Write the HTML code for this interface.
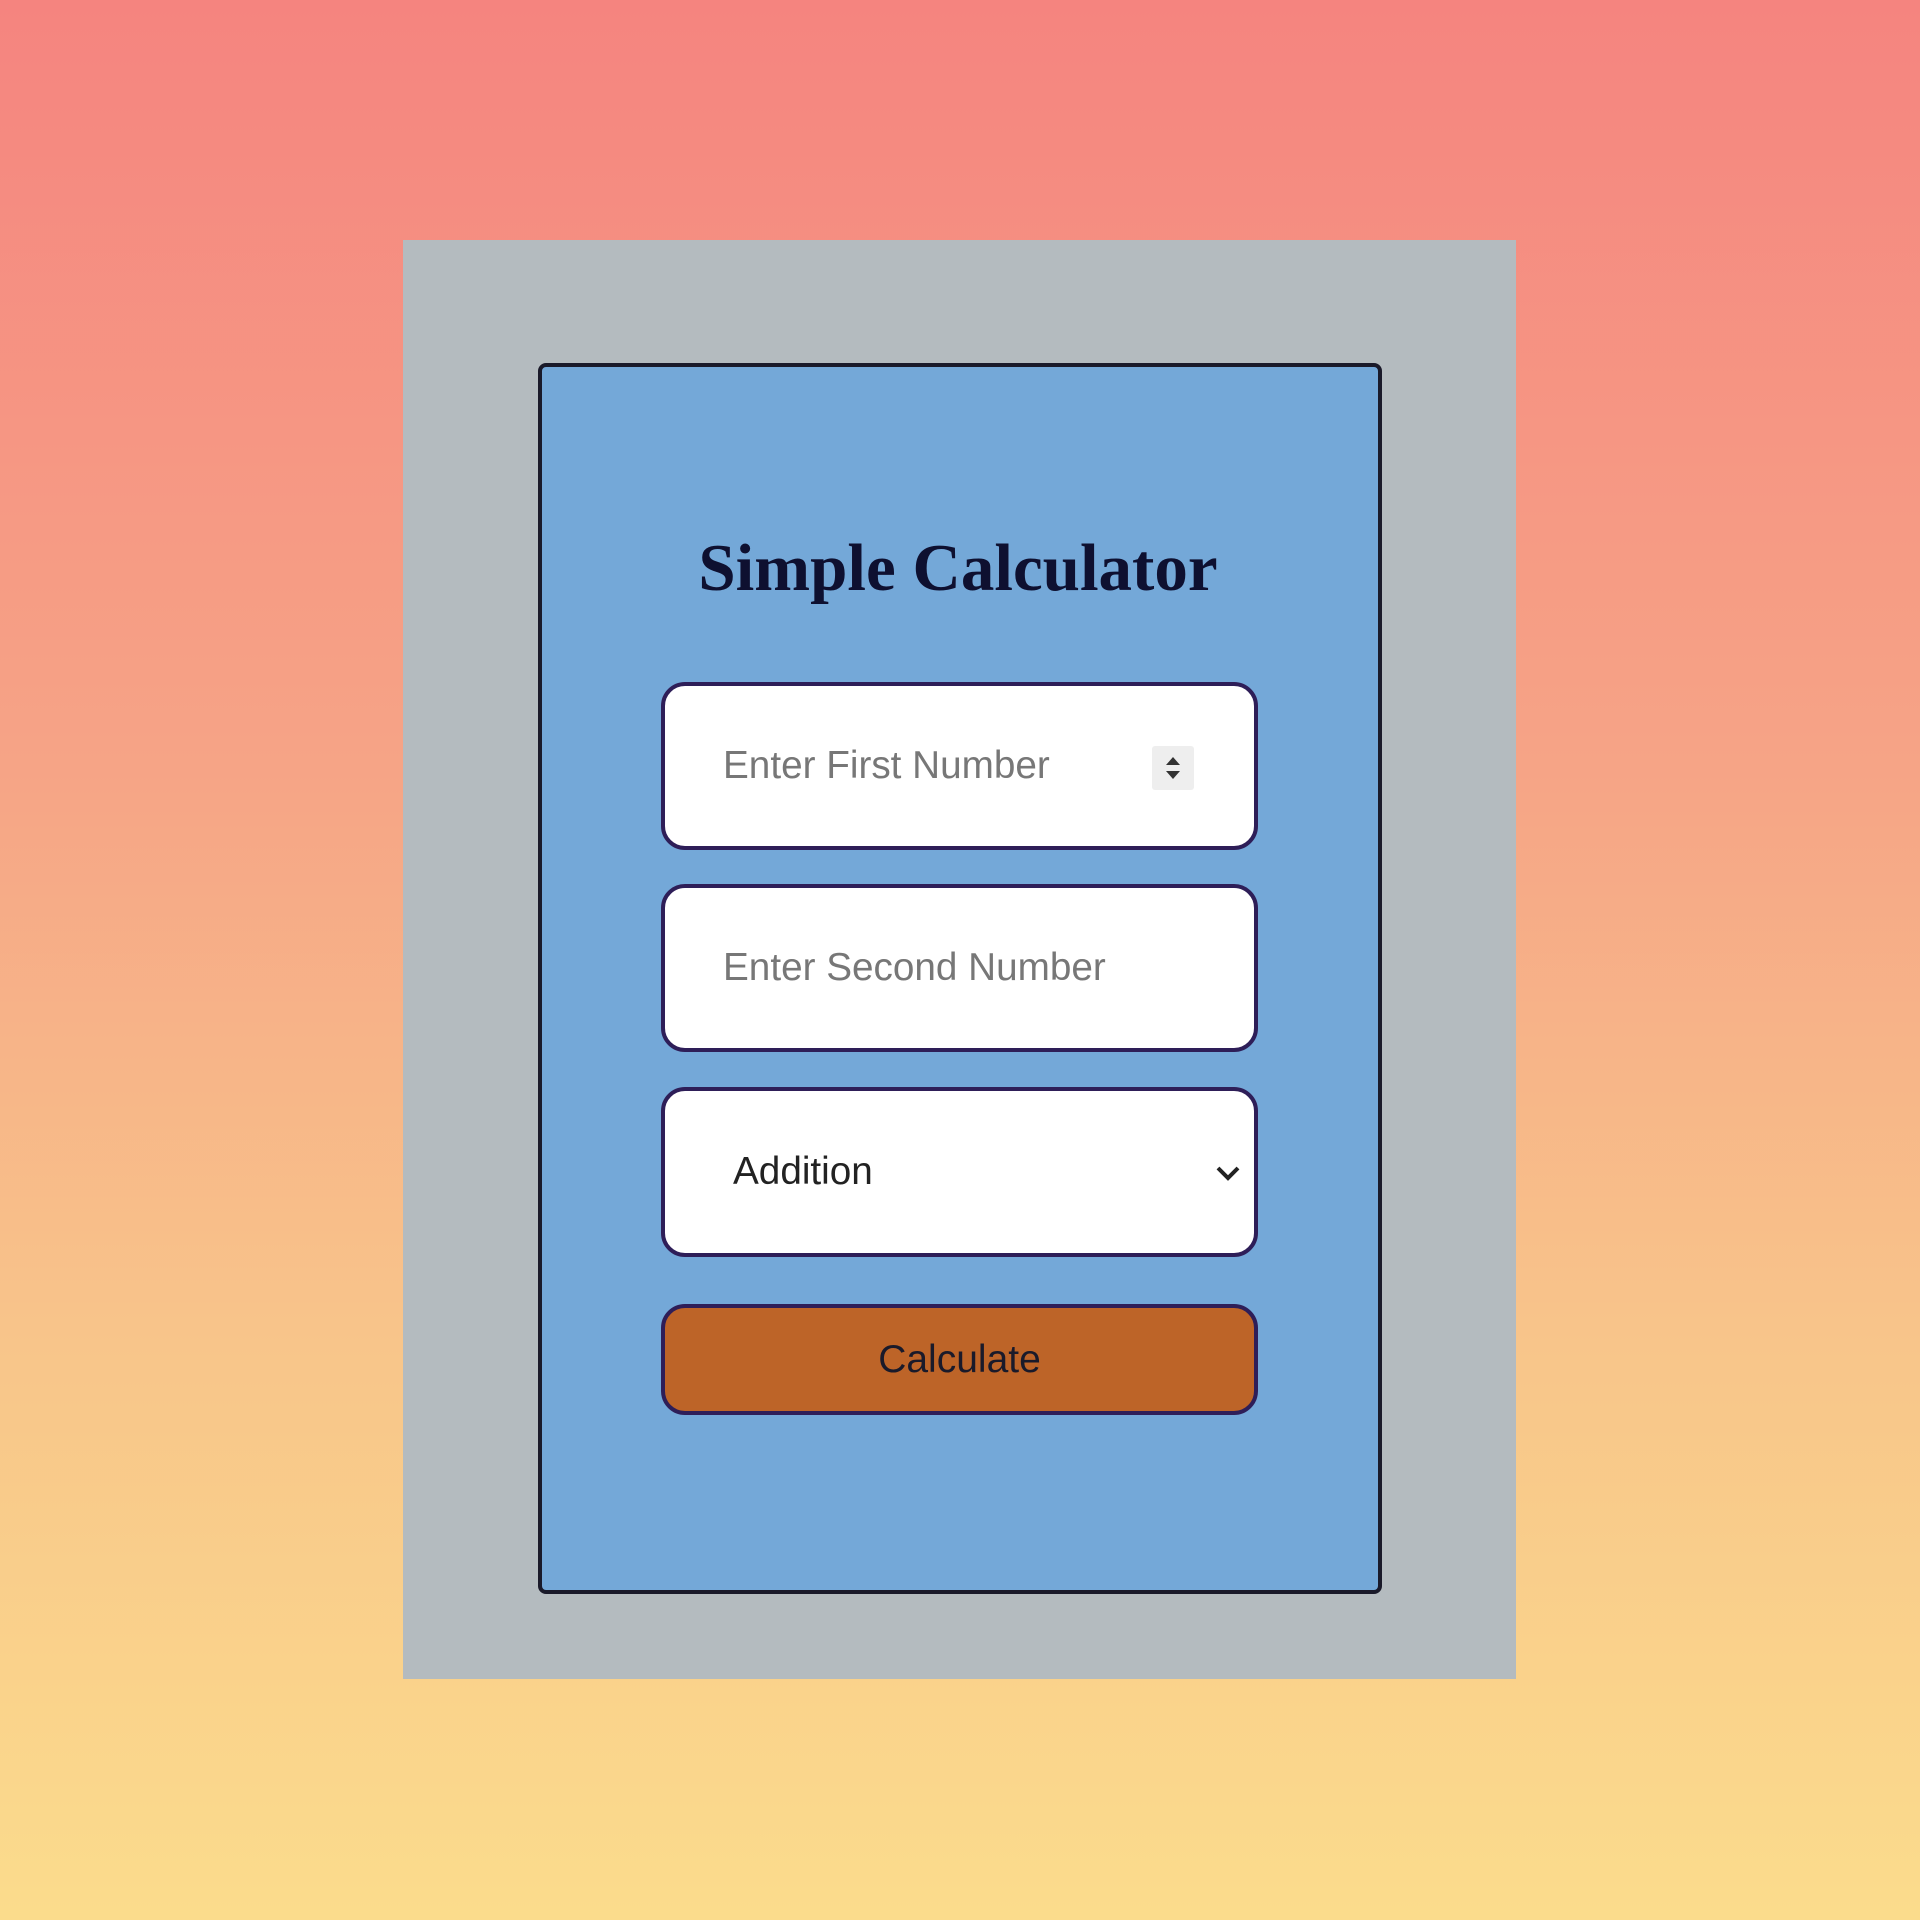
<!DOCTYPE html>
<html><head><style>
html,body{margin:0;padding:0}
body{width:1920px;height:1920px;background:linear-gradient(to bottom,#f5847f 0%,#f6a486 40%,#f8c58a 70%,#fbdc8c 100%);position:relative;overflow:hidden;font-family:"Liberation Sans",sans-serif}
.gray{position:absolute;left:403px;top:240px;width:1113px;height:1439px;background:#b4bbbf}
.card{position:absolute;left:538px;top:363px;width:836px;height:1223px;background:#74a8d8;border:4px solid #1a1a2a;border-radius:8px}
h1{position:absolute;left:0;right:0;top:528px;margin:0;text-align:center;font-family:"Liberation Serif",serif;font-weight:bold;font-size:67px;color:#0e1030;line-height:80px}
.box{position:absolute;left:661px;width:597px;background:#fff;border:4px solid #2e1e58;border-radius:24px;box-sizing:border-box}
.ph{position:absolute;left:58px;top:50%;transform:translateY(-50%);font-size:38.7px;color:#777}
</style></head><body>
<div class="gray"></div>
<div class="card"></div>
<h1 style="left:-2px;width:1920px">Simple Calculator</h1>
<div class="box" style="top:682px;height:168px"><span class="ph">Enter First Number</span>
<div style="position:absolute;left:487px;top:60px;width:42px;height:44px;background:#eee;border-radius:3px">
<svg width="42" height="44" viewBox="0 0 42 44"><path d="M14 19 L21 11 L28 19Z M14 25 L21 33 L28 25Z" fill="#333"/></svg></div></div>
<div class="box" style="top:884px;height:168px"><span class="ph">Enter Second Number</span></div>
<div class="box" style="top:1087px;height:170px"><span class="ph" style="left:68px;color:#222">Addition</span>
<svg style="position:absolute;left:549px;top:72px" width="28" height="20" viewBox="0 0 28 20"><path d="M4 5 L14 15 L24 5" stroke="#222" stroke-width="4" fill="none"/></svg></div>
<div class="box" style="top:1304px;height:111px;background:#bd6428;text-align:center;line-height:103px;font-size:39px;color:#1a1a2a">Calculate</div>
</body></html>
